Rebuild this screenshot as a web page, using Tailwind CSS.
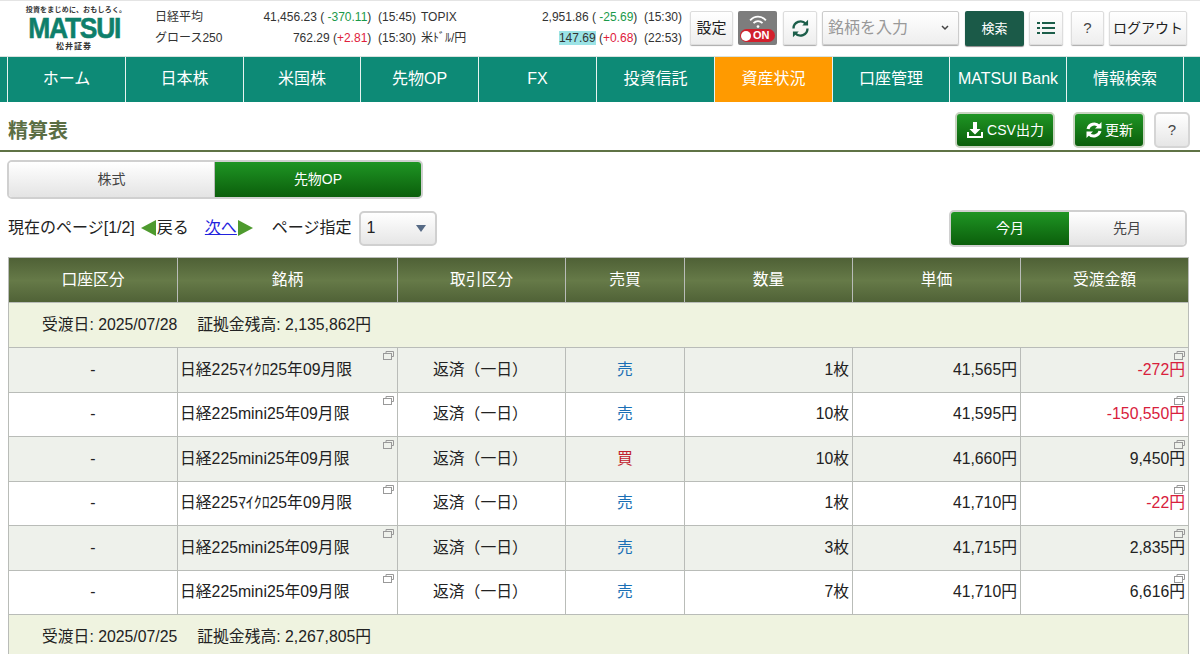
<!DOCTYPE html>
<html lang="ja">
<head>
    <meta charset="UTF-8">
    <title>精算表</title>
    <script src="https://cdn.jsdelivr.net/npm/@tailwindcss/browser@4"></script>
</head>
<body class="font-['Liberation_Sans','Noto_Sans_CJK_JP',sans-serif] text-[16px] text-[#222] bg-white h-[654px] overflow-hidden">

    <!-- header -->
    <header class="h-[56px] flex items-start border-t border-[#e4e4e4]">
        <div class="w-[150px] shrink-0 flex flex-col items-center pt-[5px]">
            <span class="text-[7px] leading-[8px] font-bold text-[#333] tracking-[0.2px] ml-[2px] whitespace-nowrap">投資をまじめに、おもしろく。</span>
            <span class="text-[30px] leading-[28px] font-bold text-[#0e7f6b] tracking-[-1.4px] ml-[-2px] font-['Liberation_Sans'] scale-x-[0.88] [-webkit-text-stroke:0.6px_#0e7f6b]">MATSUI</span>
            <span class="text-[8px] leading-[10px] font-bold text-[#333] tracking-[1px] ml-[-2px]">松井証券</span>
        </div>
        <div class="w-[527px] shrink-0 ml-[5px] mt-[6px] grid grid-cols-[70px_191px_60px_1fr] text-[12px] leading-[21px] text-[#333] whitespace-nowrap">
            <span>日経平均</span>
            <span class="text-right">41,456.23 ( <span class="text-[#1a9a4a]">-370.11</span>)&nbsp; (15:45)</span>
            <span class="pl-[5px]">TOPIX</span>
            <span class="text-right">2,951.86 ( <span class="text-[#1a9a4a]">-25.69</span>)&nbsp; (15:30)</span>
            <span>グロース250</span>
            <span class="text-right">762.29 (<span class="text-[#e0203c]">+2.81</span>)&nbsp; (15:30)</span>
            <span class="pl-[5px]">米ﾄﾞﾙ/円</span>
            <span class="text-right"><span class="bg-[#9be3e6]">147.69</span> (<span class="text-[#e0203c]">+0.68</span>)&nbsp; (22:53)</span>
        </div>
        <div class="flex items-start mt-[10px] ml-[8px]">
            <button class="w-[43px] h-[34px] border border-[#ddd] rounded-[2px] bg-gradient-to-b from-white to-[#eee] shadow-[0_1px_1px_#aaa] text-[15px] text-[#222]">設定</button>
            <div class="w-[39px] h-[34px] ml-[5px] rounded-[2px] bg-[#7d7d7d] flex flex-col items-center justify-center">
                <svg class="w-[18px] h-[15px]" viewBox="0 0 16 12" fill="none" stroke="#fff" stroke-width="1.6"><path d="M1 5 C5 0.5 11 0.5 15 5"/><path d="M4 7.500 C6.500 5 9.500 5 12 7.500"/><circle cx="8" cy="10.500" r="1.200" fill="#fff" stroke="none"/></svg>
                <div class="w-[35px] h-[13px] rounded-full bg-[#d2202c] flex items-center pl-[1px] gap-[2px]">
                    <span class="w-[10px] h-[10px] rounded-full bg-white"></span>
                    <span class="text-white font-bold text-[11px] leading-[13px] font-['Liberation_Sans']">ON</span>
                </div>
            </div>
            <button class="w-[34px] h-[34px] ml-[6px] border border-[#ddd] rounded-[2px] bg-gradient-to-b from-white to-[#eee] shadow-[0_1px_1px_#aaa] flex items-center justify-center">
                <svg class="w-[21px] h-[21px]" viewBox="0 0 18 18" fill="none" stroke="#1c5e4a" stroke-width="2"><path d="M3 9a6 6 0 0 1 10.500-4"/><path d="M15 9a6 6 0 0 1-10.500 4"/><path d="M15.500 1.500v5h-5z" fill="#1c5e4a" stroke="none"/><path d="M2.500 16.500v-5h5z" fill="#1c5e4a" stroke="none"/></svg>
            </button>
            <div class="w-[137px] h-[34px] ml-[5px] border border-[#ccc] rounded-[2px] bg-gradient-to-b from-white to-[#eee] shadow-[0_1px_1px_#aaa] flex items-center justify-between pl-[5px] pr-[9px] text-[16px] text-[#999]">
                <span>銘柄を入力</span>
                <svg class="w-[8px] h-[6px]" viewBox="0 0 8 6" fill="none" stroke="#444" stroke-width="1.500"><path d="M1 1l3 3 3-3"/></svg>
            </div>
            <button class="w-[59px] h-[35px] ml-[6px] rounded-[2px] bg-[#1b5a48] shadow-[0_1px_1px_#888] text-white text-[13px]">検索</button>
            <button class="w-[34px] h-[34px] ml-[5px] border border-[#ddd] rounded-[2px] bg-gradient-to-b from-white to-[#eee] shadow-[0_1px_1px_#aaa] flex items-center justify-center">
                <svg class="w-[18px] h-[14px]" viewBox="0 0 18 14" fill="#1c5e4a"><rect x="0" y="1" width="3" height="2"/><rect x="5" y="1" width="13" height="2"/><rect x="0" y="6" width="3" height="2"/><rect x="5" y="6" width="13" height="2"/><rect x="0" y="11" width="3" height="2"/><rect x="5" y="11" width="13" height="2"/></svg>
            </button>
            <button class="w-[33px] h-[34px] ml-[8px] border border-[#ddd] rounded-[2px] bg-gradient-to-b from-white to-[#eee] shadow-[0_1px_1px_#aaa] text-[15px] text-[#444]">?</button>
            <button class="w-[78px] h-[34px] ml-[5px] border border-[#ddd] rounded-[2px] bg-gradient-to-b from-white to-[#eee] shadow-[0_1px_1px_#aaa] text-[14px] text-[#222] whitespace-nowrap">ログアウト</button>
        </div>
    </header>

    <!-- nav -->
    <nav class="h-[46px] bg-[#0d8a76] flex pl-[7px] text-white text-[16px] border-t border-[#d8e2de]">
        <a class="w-[118px] pb-[2px] flex items-center justify-center border-l border-[#e8f3f0]">ホーム</a>
        <a class="w-[118px] pb-[2px] flex items-center justify-center border-l border-[#e8f3f0]">日本株</a>
        <a class="w-[117px] pb-[2px] flex items-center justify-center border-l border-[#e8f3f0]">米国株</a>
        <a class="w-[118px] pb-[2px] flex items-center justify-center border-l border-[#e8f3f0]">先物OP</a>
        <a class="w-[118px] pb-[2px] flex items-center justify-center border-l border-[#e8f3f0]">FX</a>
        <a class="w-[118px] pb-[2px] flex items-center justify-center border-l border-[#e8f3f0]">投資信託</a>
        <a class="w-[118px] pb-[2px] flex items-center justify-center border-l border-[#e8f3f0] bg-[#ff9a00]">資産状況</a>
        <a class="w-[117px] pb-[2px] flex items-center justify-center border-l border-[#e8f3f0]">口座管理</a>
        <a class="w-[117px] pb-[2px] flex items-center justify-center border-l border-[#e8f3f0]">MATSUI Bank</a>
        <a class="w-[118px] pb-[2px] flex items-center justify-center border-x border-[#e8f3f0]">情報検索</a>
    </nav>

    <!-- title -->
    <div class="h-[50px] flex items-start justify-between border-b-2 border-[#5f7345] pl-[8px] pr-[10px]">
        <h1 class="text-[20px] font-bold text-[#5b6e44] mt-[15px] leading-[28px]">精算表</h1>
        <div class="flex items-start mt-[10px]">
            <button class="w-[100px] h-[36px] rounded-[5px] border-2 border-[#c8d4c0] bg-gradient-to-b from-[#1f9524] to-[#0b5f0b] text-white text-[14px] flex items-center justify-center gap-[3px]">
                <svg class="w-[18px] h-[18px]" viewBox="0 0 18 18" fill="#fff"><path d="M7 1h4v7h3.500l-5.500 5.500-5.500-5.500h3.500z"/><path d="M1 11h2v4h12v-4h2v6h-16z"/></svg>
                CSV出力
            </button>
            <button class="w-[72px] h-[36px] ml-[18px] rounded-[5px] border-2 border-[#c8d4c0] bg-gradient-to-b from-[#1f9524] to-[#0b5f0b] text-white text-[14px] flex items-center justify-center gap-[2px]">
                <svg class="w-[18px] h-[18px]" viewBox="0 0 18 18" fill="none" stroke="#fff" stroke-width="3"><path d="M3 8a6.500 6.500 0 0 1 11-3"/><path d="M15 10a6.500 6.500 0 0 1-11 3"/><path d="M16.500 1v6.500h-6.500z" fill="#fff" stroke="none"/><path d="M1.500 17v-6.500h6.500z" fill="#fff" stroke="none"/></svg>
                更新
            </button>
            <button class="w-[36px] h-[36px] ml-[9px] rounded-[5px] border-2 border-[#d5d5d5] bg-gradient-to-b from-white to-[#e6e6e6] text-[15px] text-[#444]">?</button>
        </div>
    </div>

    <!-- market tabs -->
    <div class="flex w-[416px] h-[39px] ml-[7px] mt-[8px] rounded-[5px] border-2 border-[#d0d0d0] overflow-hidden text-[14px]">
        <div class="w-[206px] flex items-center justify-center bg-gradient-to-b from-white to-[#e4e4e4] text-[#444] border-r border-[#bbb]">株式</div>
        <div class="flex-1 flex items-center justify-center bg-gradient-to-b from-[#1f9524] to-[#0b5f0b] text-white">先物OP</div>
    </div>

    <!-- pager -->
    <div class="flex items-center h-[38px] mt-[10px] pl-[8px] pr-[13px]">
        <span>現在のページ[1/2]</span>
        <span class="w-0 h-0 ml-[6px] border-y-[8px] border-y-transparent border-r-[15px] border-r-[#4e9a2e]"></span>
        <span class="ml-[1px]">戻る</span>
        <a class="ml-[16px] text-[#2222dd] underline">次へ</a>
        <span class="w-0 h-0 ml-[1px] border-y-[8px] border-y-transparent border-l-[15px] border-l-[#4e9a2e]"></span>
        <span class="ml-[19px]">ページ指定</span>
        <div class="w-[78px] h-[35px] ml-[7px] rounded-[5px] border-2 border-[#d0d0d0] bg-gradient-to-b from-white to-[#e6e6e6] flex items-center justify-between pl-[6px] pr-[9px]">
            <span>1</span>
            <span class="w-0 h-0 border-x-[5px] border-x-transparent border-t-[7px] border-t-[#566a85]"></span>
        </div>
        <div class="flex w-[238px] h-[37px] ml-auto rounded-[5px] border-2 border-[#d0d0d0] overflow-hidden text-[14px]">
            <div class="w-[118px] flex items-center justify-center bg-gradient-to-b from-[#1f9524] to-[#0b5f0b] text-white">今月</div>
            <div class="flex-1 flex items-center justify-center bg-gradient-to-b from-white to-[#e4e4e4] text-[#444]">先月</div>
        </div>
    </div>

    <!-- settlement table -->
    <table class="ml-[8px] mt-[10px] w-[1180px] table-fixed border-collapse text-[15.8px] text-[#222]">
        <colgroup>
            <col class="w-[169px]"><col class="w-[220px]"><col class="w-[168px]"><col class="w-[119px]"><col class="w-[168px]"><col class="w-[168px]"><col class="w-[168px]">
        </colgroup>
        <thead>
            <tr class="h-[45px] text-white bg-gradient-to-b from-[#4f6136] via-[#667a48] to-[#4f6136]">
                <th class="font-normal border border-[#b9bcb8]">口座区分</th>
                <th class="font-normal border border-[#b9bcb8]">銘柄</th>
                <th class="font-normal border border-[#b9bcb8]">取引区分</th>
                <th class="font-normal border border-[#b9bcb8]">売買</th>
                <th class="font-normal border border-[#b9bcb8]">数量</th>
                <th class="font-normal border border-[#b9bcb8]">単価</th>
                <th class="font-normal border border-[#b9bcb8]">受渡金額</th>
            </tr>
        </thead>
        <tbody>
            <tr class="h-[45px] bg-[#eff3e0]">
                <td colspan="7" class="border border-[#b9bcb8] pl-[33px]">受渡日: 2025/07/28<span class="inline-block w-[20px]"></span>証拠金残高: 2,135,862円</td>
            </tr>
            <tr class="h-[44.500px] bg-[#eef1eb]">
                <td class="border border-[#b9bcb8] text-center">-</td>
                <td class="border border-[#b9bcb8] pl-[2px] relative">日経225ﾏｲｸﾛ25年09月限
                    <svg class="absolute top-[3px] right-[3px] w-[11px] h-[9px]" viewBox="0 0 11 9" fill="none" stroke="#999"><rect x="0.500" y="2.500" width="8" height="6"/><path d="M3 2.500v-2h7.500v5h-2"/></svg></td>
                <td class="border border-[#b9bcb8] pl-[35px]">返済（一日）</td>
                <td class="border border-[#b9bcb8] text-center text-[#1a6fb5]">売</td>
                <td class="border border-[#b9bcb8] text-right pr-[3px]">1枚</td>
                <td class="border border-[#b9bcb8] text-right pr-[3px]">41,565円</td>
                <td class="border border-[#b9bcb8] text-right pr-[3px] relative text-[#d8203c]">-272円
                    <svg class="absolute top-[3px] right-[3px] w-[11px] h-[9px]" viewBox="0 0 11 9" fill="none" stroke="#999"><rect x="0.500" y="2.500" width="8" height="6"/><path d="M3 2.500v-2h7.500v5h-2"/></svg></td>
            </tr>
            <tr class="h-[44.500px] bg-white">
                <td class="border border-[#b9bcb8] text-center">-</td>
                <td class="border border-[#b9bcb8] pl-[2px] relative">日経225mini25年09月限
                    <svg class="absolute top-[3px] right-[3px] w-[11px] h-[9px]" viewBox="0 0 11 9" fill="none" stroke="#999"><rect x="0.500" y="2.500" width="8" height="6"/><path d="M3 2.500v-2h7.500v5h-2"/></svg></td>
                <td class="border border-[#b9bcb8] pl-[35px]">返済（一日）</td>
                <td class="border border-[#b9bcb8] text-center text-[#1a6fb5]">売</td>
                <td class="border border-[#b9bcb8] text-right pr-[3px]">10枚</td>
                <td class="border border-[#b9bcb8] text-right pr-[3px]">41,595円</td>
                <td class="border border-[#b9bcb8] text-right pr-[3px] relative text-[#d8203c]">-150,550円
                    <svg class="absolute top-[3px] right-[3px] w-[11px] h-[9px]" viewBox="0 0 11 9" fill="none" stroke="#999"><rect x="0.500" y="2.500" width="8" height="6"/><path d="M3 2.500v-2h7.500v5h-2"/></svg></td>
            </tr>
            <tr class="h-[44.500px] bg-[#eef1eb]">
                <td class="border border-[#b9bcb8] text-center">-</td>
                <td class="border border-[#b9bcb8] pl-[2px] relative">日経225mini25年09月限
                    <svg class="absolute top-[3px] right-[3px] w-[11px] h-[9px]" viewBox="0 0 11 9" fill="none" stroke="#999"><rect x="0.500" y="2.500" width="8" height="6"/><path d="M3 2.500v-2h7.500v5h-2"/></svg></td>
                <td class="border border-[#b9bcb8] pl-[35px]">返済（一日）</td>
                <td class="border border-[#b9bcb8] text-center text-[#c0202c]">買</td>
                <td class="border border-[#b9bcb8] text-right pr-[3px]">10枚</td>
                <td class="border border-[#b9bcb8] text-right pr-[3px]">41,660円</td>
                <td class="border border-[#b9bcb8] text-right pr-[3px] relative">9,450円
                    <svg class="absolute top-[3px] right-[3px] w-[11px] h-[9px]" viewBox="0 0 11 9" fill="none" stroke="#999"><rect x="0.500" y="2.500" width="8" height="6"/><path d="M3 2.500v-2h7.500v5h-2"/></svg></td>
            </tr>
            <tr class="h-[44.500px] bg-white">
                <td class="border border-[#b9bcb8] text-center">-</td>
                <td class="border border-[#b9bcb8] pl-[2px] relative">日経225ﾏｲｸﾛ25年09月限
                    <svg class="absolute top-[3px] right-[3px] w-[11px] h-[9px]" viewBox="0 0 11 9" fill="none" stroke="#999"><rect x="0.500" y="2.500" width="8" height="6"/><path d="M3 2.500v-2h7.500v5h-2"/></svg></td>
                <td class="border border-[#b9bcb8] pl-[35px]">返済（一日）</td>
                <td class="border border-[#b9bcb8] text-center text-[#1a6fb5]">売</td>
                <td class="border border-[#b9bcb8] text-right pr-[3px]">1枚</td>
                <td class="border border-[#b9bcb8] text-right pr-[3px]">41,710円</td>
                <td class="border border-[#b9bcb8] text-right pr-[3px] relative text-[#d8203c]">-22円
                    <svg class="absolute top-[3px] right-[3px] w-[11px] h-[9px]" viewBox="0 0 11 9" fill="none" stroke="#999"><rect x="0.500" y="2.500" width="8" height="6"/><path d="M3 2.500v-2h7.500v5h-2"/></svg></td>
            </tr>
            <tr class="h-[44.500px] bg-[#eef1eb]">
                <td class="border border-[#b9bcb8] text-center">-</td>
                <td class="border border-[#b9bcb8] pl-[2px] relative">日経225mini25年09月限
                    <svg class="absolute top-[3px] right-[3px] w-[11px] h-[9px]" viewBox="0 0 11 9" fill="none" stroke="#999"><rect x="0.500" y="2.500" width="8" height="6"/><path d="M3 2.500v-2h7.500v5h-2"/></svg></td>
                <td class="border border-[#b9bcb8] pl-[35px]">返済（一日）</td>
                <td class="border border-[#b9bcb8] text-center text-[#1a6fb5]">売</td>
                <td class="border border-[#b9bcb8] text-right pr-[3px]">3枚</td>
                <td class="border border-[#b9bcb8] text-right pr-[3px]">41,715円</td>
                <td class="border border-[#b9bcb8] text-right pr-[3px] relative">2,835円
                    <svg class="absolute top-[3px] right-[3px] w-[11px] h-[9px]" viewBox="0 0 11 9" fill="none" stroke="#999"><rect x="0.500" y="2.500" width="8" height="6"/><path d="M3 2.500v-2h7.500v5h-2"/></svg></td>
            </tr>
            <tr class="h-[44.500px] bg-white">
                <td class="border border-[#b9bcb8] text-center">-</td>
                <td class="border border-[#b9bcb8] pl-[2px] relative">日経225mini25年09月限
                    <svg class="absolute top-[3px] right-[3px] w-[11px] h-[9px]" viewBox="0 0 11 9" fill="none" stroke="#999"><rect x="0.500" y="2.500" width="8" height="6"/><path d="M3 2.500v-2h7.500v5h-2"/></svg></td>
                <td class="border border-[#b9bcb8] pl-[35px]">返済（一日）</td>
                <td class="border border-[#b9bcb8] text-center text-[#1a6fb5]">売</td>
                <td class="border border-[#b9bcb8] text-right pr-[3px]">7枚</td>
                <td class="border border-[#b9bcb8] text-right pr-[3px]">41,710円</td>
                <td class="border border-[#b9bcb8] text-right pr-[3px] relative">6,616円
                    <svg class="absolute top-[3px] right-[3px] w-[11px] h-[9px]" viewBox="0 0 11 9" fill="none" stroke="#999"><rect x="0.500" y="2.500" width="8" height="6"/><path d="M3 2.500v-2h7.500v5h-2"/></svg></td>
            </tr>
            <tr class="h-[45px] bg-[#eff3e0]">
                <td colspan="7" class="border border-[#b9bcb8] pl-[33px]">受渡日: 2025/07/25<span class="inline-block w-[20px]"></span>証拠金残高: 2,267,805円</td>
            </tr>
        </tbody>
    </table>
</body>
</html>
